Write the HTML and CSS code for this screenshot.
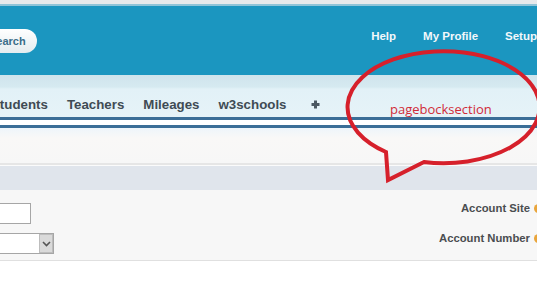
FILE: index.html
```html
<!DOCTYPE html>
<html>
<head>
<meta charset="utf-8">
<link rel="stylesheet" href="styles.css">
</head>
<body>
<div class="page">
  <div class="topstrip"></div>
  <div class="header">
    <div class="search">Search</div>
    <nav class="toplinks">
      <span>Help</span>
      <span>My Profile</span>
      <span>Setup</span>
    </nav>
  </div>
  <div class="tabbar">
    <span class="tab first">Students</span>
    <span class="tab">Teachers</span>
    <span class="tab">Mileages</span>
    <span class="tab">w3schools</span>
    <span class="tab plus"><svg width="9" height="9" viewBox="0 0 9 9"><path d="M4.5 0.5v8M0.5 4.5h8" stroke="#4b5862" stroke-width="3"/></svg></span>
  </div>
  <div class="rule"></div>
  <div class="gap"></div>
  <div class="rule"></div>
  <div class="subarea"></div>
  <div class="sectionhead"></div>
  <div class="form">
    <div class="row">
      <input class="textin" type="text">
      <label class="lbl">Account Site<span class="dot"></span></label>
    </div>
    <div class="row">
      <div class="select"><span class="selbtn"><svg width="9" height="6" viewBox="0 0 9 6"><path d="M1 1l3.5 3.5L8 1" fill="none" stroke="#555" stroke-width="1.6"/></svg></span></div>
      <label class="lbl">Account Number<span class="dot"></span></label>
    </div>
  </div>
  <svg class="bubble" width="537" height="282" viewBox="0 0 537 282">
    <path d="M424 162 A96 56 0 1 0 386 152 L388 180 Z" fill="none" stroke="#d6202b" stroke-width="4" stroke-linejoin="miter"/>
  </svg>
  <span class="note">pagebocksection</span>
</div>
</body>
</html>
```

FILE: styles.css
```css
html, body {
  margin: 0;
  padding: 0;
  background: #ffffff;
}
.page {
  position: relative;
  width: 537px;
  height: 282px;
  overflow: hidden;
  font-family: "Liberation Sans", Arial, sans-serif;
}
.topstrip {
  height: 4px;
  background: #e6e9eb;
}
.header {
  height: 69px;
  border-top: 2px solid #8fc4d8;
  background: #1b96c0;
  display: flex;
  align-items: flex-start;
  justify-content: space-between;
}
.search {
  margin-top: 23px;
  margin-left: -24px;
  height: 24px;
  line-height: 24px;
  padding: 0 11px 0 13px;
  border-radius: 12px;
  background: linear-gradient(#ffffff, #e4ecef);
  color: #3a6d88;
  font-weight: bold;
  font-size: 11px;
}
.toplinks {
  margin-top: 24px;
  display: flex;
  gap: 27px;
  margin-right: 0;
  color: #f2f8fb;
  font-weight: bold;
  font-size: 11.5px;
  line-height: 13px;
}
.tabbar {
  height: 42px;
  box-sizing: border-box;
  padding-top: 22px;
  background: linear-gradient(#cfe4ec 0px, #d6eaf1 12px, #e2f1f7 14px, #e6f3f8 42px);
  display: flex;
  align-items: flex-start;
  gap: 19px;
}
.tab {
  font-size: 13.3px;
  font-weight: bold;
  line-height: 15px;
  color: #3f4b54;
}
.tab.first {
  margin-left: -9px;
}
.tab.plus {
  margin-left: 6px;
  padding-top: 3px;
  line-height: 9px;
}
.rule {
  height: 3px;
  background: #3b6e97;
}
.gap {
  height: 5px;
  background: #ffffff;
}
.subarea {
  height: 35px;
  background: linear-gradient(#eef5fa 0px, #f9f8f7 10px, #f7f7f7 35px);
  border-bottom: 2px solid #e6e6e6;
}
.sectionhead {
  height: 24px;
  border-top: 1px solid #fbfbfb;
  background: #e0e5ec;
}
.form {
  height: 57px;
  padding-top: 13px;
  background: #f7f7f7;
  border-bottom: 1px solid #e0e0e0;
  display: flex;
  flex-direction: column;
  gap: 9px;
}
.row {
  display: flex;
  justify-content: space-between;
  align-items: flex-start;
  height: 21px;
}
.textin {
  margin: 0 0 0 -20px;
  width: 49px;
  height: 19px;
  padding: 0;
  box-sizing: content-box;
  border: 1px solid #a6a6a6;
  background: #ffffff;
}
.select {
  margin-left: -20px;
  width: 72px;
  height: 19px;
  border: 1px solid #a6a6a6;
  background: #ffffff;
  display: flex;
  justify-content: flex-end;
}
.selbtn {
  width: 14px;
  height: 19px;
  box-sizing: border-box;
  border: 1px solid #bdbdbd;
  background: #dadada;
  display: flex;
  align-items: center;
  justify-content: center;
}
.lbl {
  margin-top: -1px;
  margin-right: -1px;
  display: flex;
  align-items: center;
  gap: 4px;
  font-size: 11.3px;
  font-weight: bold;
  line-height: 13px;
  color: #4a4d50;
}
.dot {
  width: 9px;
  height: 9px;
  border-radius: 50%;
  background: #e9a53b;
  margin-right: -5px;
}
.bubble {
  position: absolute;
  left: 0;
  top: 0;
  pointer-events: none;
}
.note {
  position: absolute;
  left: 390px;
  top: 100px;
  font-family: "Open Sans", sans-serif;
  font-size: 13px;
  line-height: 18px;
  color: #d12b38;
}
```
